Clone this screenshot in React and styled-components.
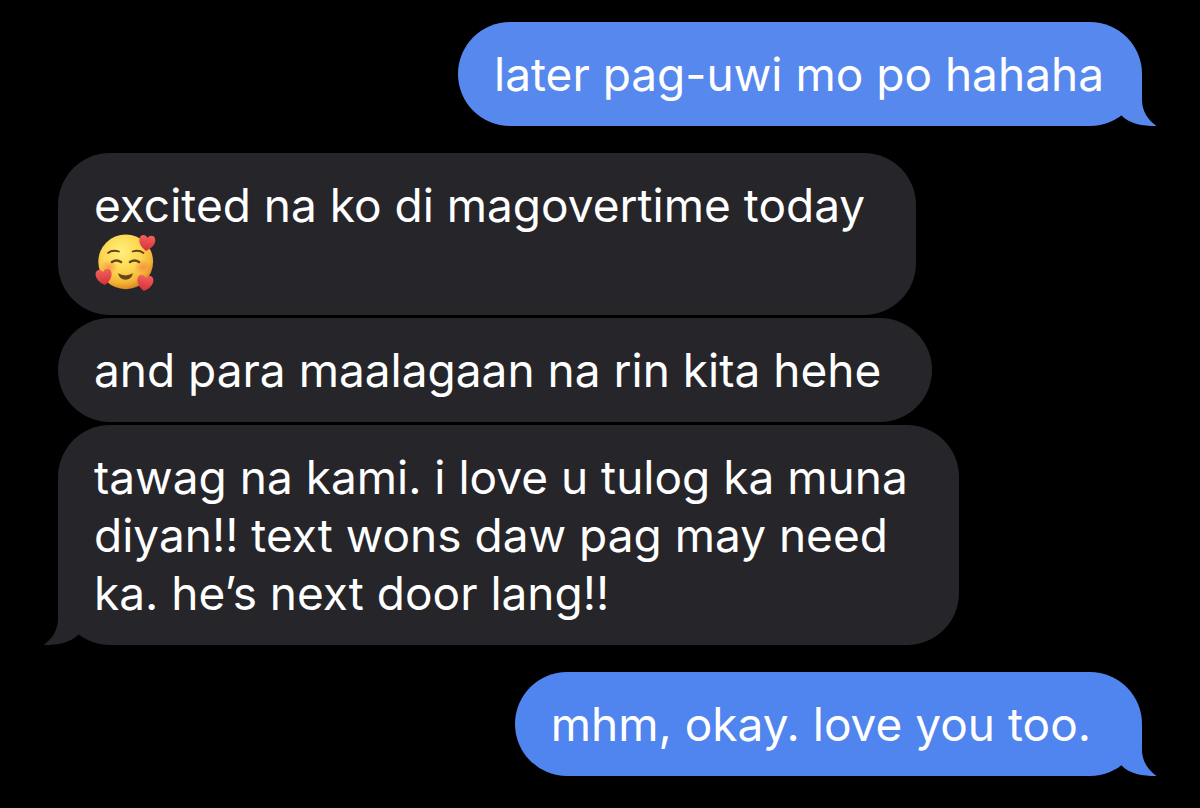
import React from "react";
import styled, { createGlobalStyle } from "styled-components";

const groups = [
  {
    sender: "me",
    color: "#5688ee",
    messages: [{ content: "later pag-uwi mo po hahaha", snug: true }],
  },
  {
    sender: "them",
    color: "#26252a",
    messages: [
      { content: "excited na ko di magovertime today\n", emoji: true },
      { content: "and para maalagaan na rin kita hehe" },
      {
        content:
          "tawag na kami. i love u tulog ka muna\ndiyan!! text wons daw pag may need\nka. he’s next door lang!!",
      },
    ],
  },
  {
    sender: "me",
    color: "#5084ee",
    messages: [{ content: "mhm, okay. love you too." }],
  },
];

const heart =
  "M0 8C-4 5.5 -8 2 -8 -3C-8 -8.5 -2 -9 0 -5C2 -9 8 -8.5 8 -3C8 2 4 5.5 0 8Z";

const SmilingHearts = () => (
  <Emoji viewBox="0 0 62 58" role="img" aria-label="smiling face with hearts">
    <defs>
      <radialGradient id="face" cx="42%" cy="32%" r="68%">
        <stop offset="0" stopColor="#fff07c" />
        <stop offset="0.5" stopColor="#fdd852" />
        <stop offset="0.82" stopColor="#f5b638" />
        <stop offset="1" stopColor="#db8a22" />
      </radialGradient>
      <radialGradient id="blush">
        <stop offset="0" stopColor="#f4783c" stopOpacity="0.6" />
        <stop offset="1" stopColor="#f4783c" stopOpacity="0" />
      </radialGradient>
      <linearGradient id="heart" x1="0" y1="0" x2="0" y2="1">
        <stop offset="0" stopColor="#f3605a" />
        <stop offset="1" stopColor="#d5303b" />
      </linearGradient>
    </defs>
    <circle cx="31.7" cy="27.8" r="27.4" fill="url(#face)" />
    <ellipse cx="15" cy="33" rx="9" ry="7" fill="url(#blush)" />
    <ellipse cx="49" cy="33" rx="9" ry="7" fill="url(#blush)" />
    <g fill="none" stroke="#68451a" strokeLinecap="round">
      <path
        d="M14 19Q18 15.5 25 17.5M38.5 17.5Q45 15.5 49.5 19"
        strokeWidth="1.8"
      />
      <path
        d="M18 28Q22.5 25 27 28M36 28Q40.5 25 45 28"
        strokeWidth="2.6"
      />
    </g>
    <path
      d="M24 39.3Q31.5 43.5 39 39.3Q37.5 45.7 31.5 45.7Q25.5 45.7 24 39.3Z"
      fill="#68451a"
    />
    <path d={heart} fill="url(#heart)" transform="translate(53 9) rotate(6)" />
    <path d={heart} fill="url(#heart)" transform="translate(10 43) rotate(-8)" />
    <path d={heart} fill="url(#heart)" transform="translate(51 49) rotate(8)" />
  </Emoji>
);

const App = () => {
  return (
    <>
      <GlobalStyle />
      <ChatContainer>
        {groups.map((group, groupIndex) => (
          <MessageGroup key={groupIndex} $sender={group.sender}>
            {group.messages.map((msg, index) => (
              <Message key={index} $color={group.color} $snug={msg.snug}>
                {msg.content}
                {msg.emoji && <SmilingHearts />}
                {index === group.messages.length - 1 && (
                  <Tail
                    viewBox="0 0 45 60"
                    $sender={group.sender}
                    $color={group.color}
                    aria-hidden="true"
                  >
                    <path d="M30 8V34C30 45 36 54 44.5 60C30 60 18 58 9.5 49.5L0 30Z" />
                  </Tail>
                )}
              </Message>
            ))}
          </MessageGroup>
        ))}
      </ChatContainer>
    </>
  );
};

export default App;

const GlobalStyle = createGlobalStyle`
  body {
    margin: 0;
    background-color: #000000;
  }
`;

const ChatContainer = styled.main`
  display: flex;
  flex-direction: column;
  gap: 27px;
  padding: 22px 58px 32px;
  font-family: Inter, "Liberation Sans", sans-serif;
`;

const MessageGroup = styled.section`
  display: flex;
  flex-direction: column;
  align-items: ${({ $sender }) =>
    $sender === "me" ? "flex-end" : "flex-start"};
  gap: 3px;
`;

const Message = styled.div`
  position: relative;
  padding: 23px ${({ $snug }) => ($snug ? "38px" : "51px")} 23px 36px;
  border-radius: 52px;
  background-color: ${({ $color }) => $color};
  color: #ffffff;
  font-size: 46px;
  line-height: 58px;
  white-space: pre-line;
`;

const Emoji = styled.svg`
  display: inline-block;
  width: 62px;
  height: 58px;
  vertical-align: top;
`;

const Tail = styled.svg`
  position: absolute;
  bottom: 0;
  ${({ $sender }) => ($sender === "me" ? "right" : "left")}: -15px;
  width: 45px;
  height: 60px;
  fill: ${({ $color }) => $color};
  transform: ${({ $sender }) => ($sender === "me" ? "none" : "scaleX(-1)")};
`;
